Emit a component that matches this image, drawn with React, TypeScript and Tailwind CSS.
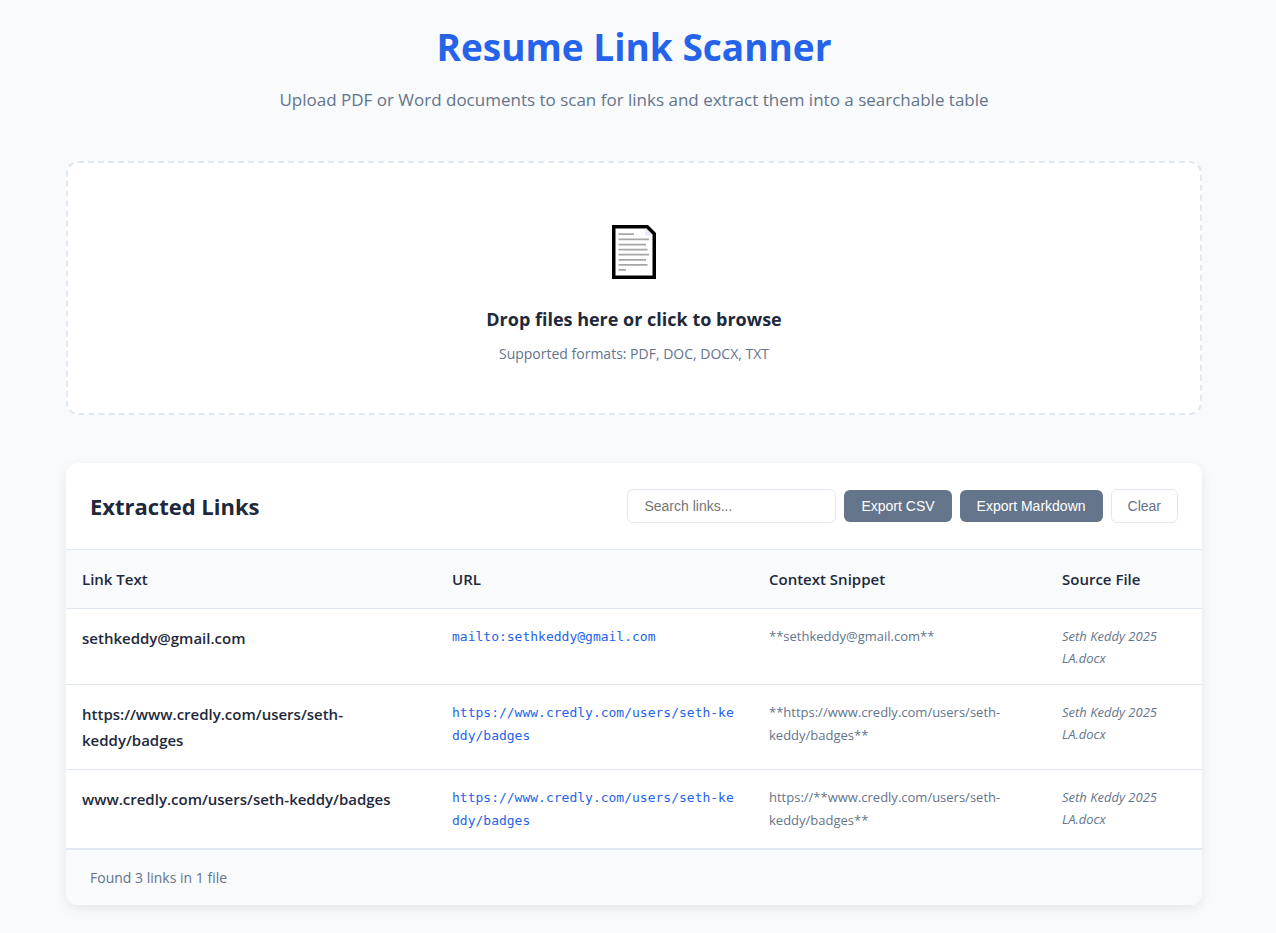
import { useState } from "react";

type Link = { text: string; url: string; context: string; source: string };

const links: Link[] = [
  {
    text: "sethkeddy@gmail.com",
    url: "mailto:sethkeddy@gmail.com",
    context: "**sethkeddy@gmail.com**",
    source: "Seth Keddy 2025 LA.docx",
  },
  {
    text: "https://www.credly.com/users/seth-keddy/badges",
    url: "https://www.credly.com/users/seth-keddy/badges",
    context: "**https://www.credly.com/users/seth-keddy/badges**",
    source: "Seth Keddy 2025 LA.docx",
  },
  {
    text: "www.credly.com/users/seth-keddy/badges",
    url: "https://www.credly.com/users/seth-keddy/badges",
    context: "https://**www.credly.com/users/seth-keddy/badges**",
    source: "Seth Keddy 2025 LA.docx",
  },
];

function DocumentIcon() {
  return (
    <svg width="44" height="54" viewBox="0 0 44 54" aria-hidden="true">
      <path d="M0 0H36L44 8V54H0Z" fill="#000" />
      <path d="M3.5 3.5H34L40.5 10V50.5H3.5Z" fill="#fff" />
      <path d="M33 3.5H34.5L40.5 9.5V10.5H33Z" fill="#e8ecf7" />
      <path
        d="M6.5 9.2H22M6.5 14.4H37M6.5 19.6H34M6.5 24.6H35.5M6.5 29.6H37M6.5 34.8H34M6.5 39.8H35.5M6.5 44.8H14"
        stroke="#a6a6a6"
        strokeWidth="1.7"
      />
    </svg>
  );
}

export default function App() {
  const [query, setQuery] = useState("");
  const [rows, setRows] = useState(links);
  const shown = rows.filter((r) =>
    Object.values(r).some((v) => v.toLowerCase().includes(query.toLowerCase())),
  );

  return (
    <div className="min-h-screen bg-[#f8fafc] pr-2 font-['Open_Sans','Noto_Sans',sans-serif] text-[15px] leading-[26px] text-[#1e293b]">
      <main className="mx-auto max-w-[1200px] px-8 pt-4 pb-7">
        <header className="mb-12 text-center">
          <h1 className="mb-2 text-[37px] leading-[62px] font-bold text-[#2563eb]">Resume Link Scanner</h1>
          <p className="text-[17px] leading-[27px] text-[#64748b]">
            Upload PDF or Word documents to scan for links and extract them into a searchable table
          </p>
        </header>

        <label className="mb-12 flex cursor-pointer flex-col items-center rounded-xl border-2 border-dashed border-[#e2e8f0] bg-white pt-[62px] pb-12 text-center">
          <input type="file" multiple accept=".pdf,.doc,.docx,.txt" className="sr-only" />
          <DocumentIcon />
          <span className="mt-6 mb-2 text-[18px] leading-[32px] font-bold">Drop files here or click to browse</span>
          <span className="text-[14px] leading-[22px] text-[#64748b]">Supported formats: PDF, DOC, DOCX, TXT</span>
        </label>

        <section className="overflow-hidden rounded-xl bg-white shadow-[0_4px_12px_rgba(0,0,0,0.08)]">
          <div className="flex items-center justify-between border-b border-[#e2e8f0] p-6">
            <h2 className="text-[22px] leading-[38px] font-bold">Extracted Links</h2>
            <div className="flex items-center gap-2 font-['Liberation_Sans',sans-serif] text-[14px] leading-[16px]">
              <input
                type="text"
                aria-label="Search links"
                placeholder="Search links..."
                value={query}
                onChange={(e) => setQuery(e.target.value)}
                className="w-[209px] rounded-md border border-[#e2e8f0] px-4 py-2 placeholder:text-[#757575]"
              />
              <button type="button" className="rounded-md bg-[#64748b] px-[17px] py-2 text-white">
                Export CSV
              </button>
              <button type="button" className="rounded-md bg-[#64748b] px-[17px] py-2 text-white">
                Export Markdown
              </button>
              <button
                type="button"
                onClick={() => setRows([])}
                className="rounded-md border border-[#e2e8f0] px-4 py-2 text-[#64748b]"
              >
                Clear
              </button>
            </div>
          </div>

          <table className="w-full table-fixed border-collapse text-left">
            <colgroup>
              <col />
              <col className="w-[317px]" />
              <col className="w-[293px]" />
              <col className="w-[156px]" />
            </colgroup>
            <thead className="bg-[#f8fafc]">
              <tr className="border-b border-[#e2e8f0]">
                <th className="p-4 font-semibold">Link Text</th>
                <th className="p-4 font-semibold">URL</th>
                <th className="p-4 font-semibold">Context Snippet</th>
                <th className="p-4 font-semibold">Source File</th>
              </tr>
            </thead>
            <tbody>
              {shown.map((r) => (
                <tr key={r.text} className="border-b border-[#e2e8f0] align-top">
                  <td className="p-4 font-semibold">{r.text}</td>
                  <td className="p-4 font-['DejaVu_Sans_Mono','Liberation_Mono',monospace] text-[13px] leading-[23px] break-all">
                    <a href={r.url} className="text-[#2563eb]">
                      {r.url}
                    </a>
                  </td>
                  <td className="p-4 text-[13px] leading-[23px] text-[#64748b]">{r.context}</td>
                  <td className="px-4 pt-4 pb-[15px] text-[13px] leading-[22px] text-[#64748b] italic">{r.source}</td>
                </tr>
              ))}
            </tbody>
          </table>

          <footer className="border-t border-[#e2e8f0] bg-[#f8fafc] px-6 py-4 text-[14px] leading-[23px] text-[#64748b]">
            Found {shown.length} links in {shown.length ? 1 : 0} file
          </footer>
        </section>
      </main>
    </div>
  );
}
